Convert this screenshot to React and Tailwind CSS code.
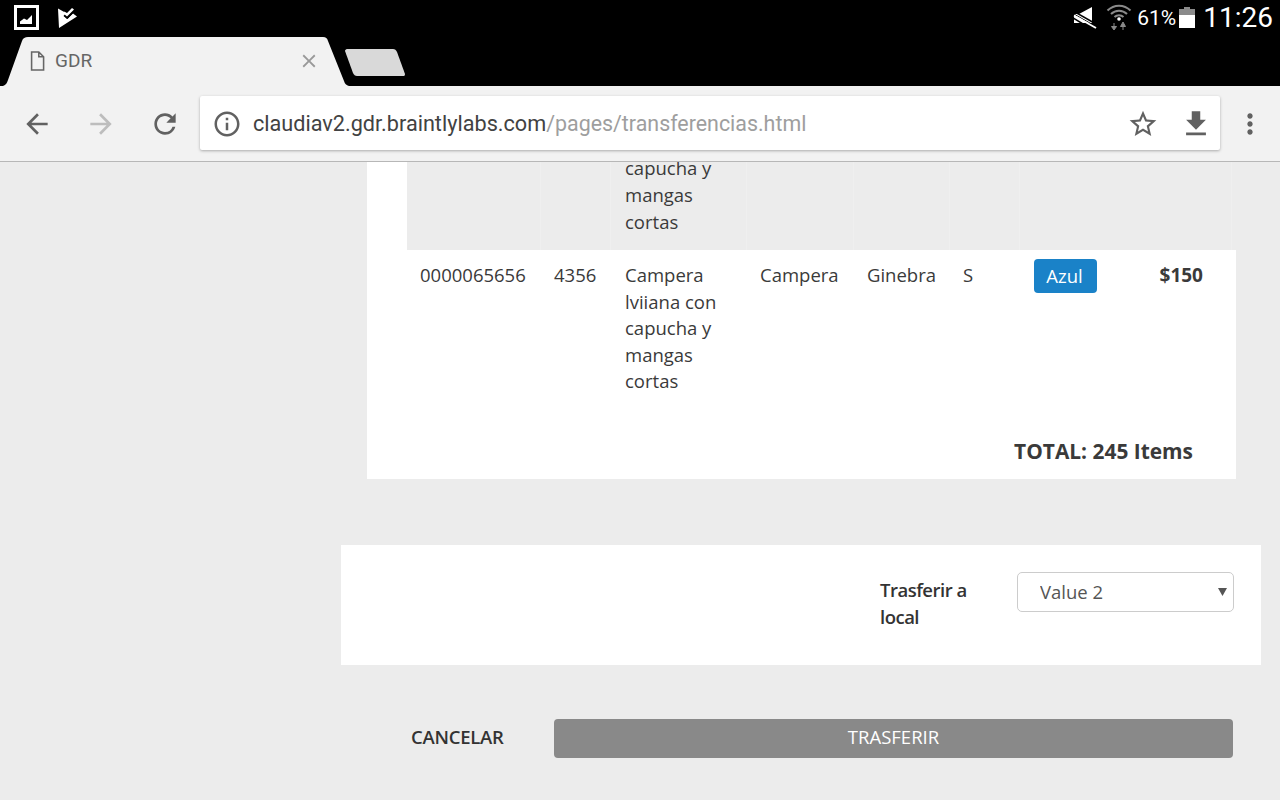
import { MdArrowBack, MdArrowForward, MdRefresh, MdStarBorder, MdFileDownload, MdInfoOutline, MdMoreVert, MdClose } from "react-icons/md";

const StatusBar = () => {
  return (
    <div className="flex h-[37px] items-start pr-[7px] text-white">
      <svg className="ml-[14px] mt-[5px]" width="25" height="25" viewBox="0 0 25 25">
        <rect x="1.5" y="1.5" width="22" height="22" fill="none" stroke="#fff" strokeWidth="3" />
        <path d="M6 19v-2.5l4-3 3 1.500 5-5v9z" fill="#fff" />
      </svg>
      <svg className="ml-[18px] mt-[7px]" width="22" height="22" viewBox="0 0 22 22">
        <path d="M1 1.500l8 4.500L6.500 9l3.500 3 6-5.500 4 3L2 21z" fill="#fff" />
        <path d="M8 8.500l2.500 2.200L17.500 3" fill="none" stroke="#000" strokeWidth="2" />
        <path d="M7 4.500l3 1.500 5-5 2 1.500-7 7-3.500-3z" fill="#fff" />
      </svg>
      <svg className="ml-auto mt-[7px]" width="24" height="22" viewBox="0 0 24 22">
        <path d="M1 7h5L19 0v16H1z" fill="#fff" />
        <path d="M0 4L23 17" stroke="#000" strokeWidth="1.500" />
        <path d="M0 6.500L23 19.500" stroke="#000" strokeWidth="1" />
        <path d="M1 8.500L23 21" stroke="#fff" strokeWidth="2" />
        <path d="M0 11L15 20" stroke="#000" strokeWidth="1.500" />
      </svg>
      <svg className="ml-[9px] mt-[2px]" width="26" height="29" viewBox="0 0 26 29">
        <path d="M1.500 8.500C8 2 18 2 24.500 8.500M5 12c4.500-4.500 11.500-4.500 16 0M8.500 15c2.500-2.500 6.500-2.500 9 0" fill="none" stroke="#8a8a8a" strokeWidth="2" />
        <circle cx="13" cy="17" r="1.800" fill="#fff" />
        <path d="M8 21v5M5.500 24.500L8 28l2.500-3.500zM17 28v-6M14.500 24.500L17 20l2.500 4.500z" fill="#8a8a8a" stroke="#8a8a8a" />
      </svg>
      <span className="ml-[5px] mt-[5px] font-['Roboto',sans-serif] text-[21px] leading-[27px]">61%</span>
      <svg className="ml-[3px] mt-[7px]" width="16" height="21" viewBox="0 0 16 21">
        <path d="M5 0h6v2h5v6H0V2h5z" fill="#8a8a8a" />
        <rect y="8" width="16" height="13" fill="#fff" />
      </svg>
      <span className="ml-[8px] mt-[1px] font-['Roboto',sans-serif] text-[28px] leading-[33px]">11:26</span>
    </div>
  );
};

const TabStrip = () => {
  return (
    <div className="flex h-[49px] items-start">
      <div className="relative h-[49px] w-[352px]">
        <svg className="absolute left-0 top-0" width="352" height="49" viewBox="0 0 352 49">
          <path d="M3 49C6 48 7 46 8 43L22 4C23 1 25 0 28 0H323C326 0 327 1 328 4L344 44C345 47 346 48 349 49z" fill="#f2f2f2" />
        </svg>
        <div className="relative flex h-[49px] items-center pb-[1px] pl-[25px]">
          <svg width="24" height="24" viewBox="0 0 20 20">
            <path d="M5.500 2.500h6l4 4v11h-10z M11.500 2.500v4h4" fill="none" stroke="#666" strokeWidth="1.300" />
          </svg>
          <span className="ml-[6px] font-['Roboto',sans-serif] text-[19px] text-[#666]">GDR</span>
          <MdClose className="ml-auto mr-[32px] text-[#999]" size={22} />
        </div>
      </div>
      <svg className="-ml-[7px] mt-[12px]" width="60" height="28" viewBox="0 0 60 28">
        <path d="M2 0H48C50 0 51 1 52 3L60 25C60 27 59 27 58 27H12C10 27 9 26 8 24L0 2C0 1 1 0 2 0z" fill="#d9d9d9" />
      </svg>
    </div>
  );
};

const Toolbar = () => {
  return (
    <div className="flex h-[76px] shrink-0 items-start border-b border-[#b7b7b7] bg-[#f2f2f2] pl-[5px] pt-[10px]">
      <div className="flex h-[54px] w-[64px] items-center justify-center pt-[2px] text-[#616161]">
        <MdArrowBack size={32} />
      </div>
      <div className="flex h-[54px] w-[64px] items-center justify-center pt-[2px] text-[#bdbdbd]">
        <MdArrowForward size={32} />
      </div>
      <div className="flex h-[54px] w-[64px] items-center justify-center pt-[2px] text-[#616161]">
        <MdRefresh size={32} />
      </div>
      <div className="ml-[3px] flex h-[54px] w-[1020px] items-center rounded-[2px] bg-white pl-[12px] pr-[7px] pt-[2px] font-['Roboto',sans-serif] text-[#9e9e9e] shadow-[0_1px_3px_rgba(0,0,0,0.3)]">
        <MdInfoOutline className="mr-[11px] text-[#616161]" size={30} />
        <span className="text-[21.65px] text-[#424242]">claudiav2.gdr.braintlylabs.com</span>
        <span className="text-[21.4px]">/pages/transferencias.html</span>
        <MdStarBorder className="ml-auto text-[#616161]" size={32} />
        <MdFileDownload className="ml-[20px] text-[#616161]" size={34} />
      </div>
      <div className="flex h-[54px] w-[60px] items-center justify-center pt-[2px] text-[#616161]">
        <MdMoreVert size={32} />
      </div>
    </div>
  );
};

// fila anterior, cortada por el scroll: solo se ve el final de la descripcion
const ScrolledRow = () => {
  return (
    <div className="grid h-[88px] grid-cols-[134px_70px_136px_107px_96px_70px_212px_4px] bg-[#ececec]">
      <div className="border-r border-[#efefef]" />
      <div className="border-r border-[#efefef]" />
      <div className="border-r border-[#efefef] pl-[14px] pr-[14px]">
        <div className="-mt-[8px] leading-[27px]">capucha y mangas cortas</div>
      </div>
      <div className="border-r border-[#efefef]" />
      <div className="border-r border-[#efefef]" />
      <div className="border-r border-[#efefef]" />
      <div className="border-r border-[#efefef]" />
      <div />
    </div>
  );
};

const Row = () => {
  return (
    <div className="grid h-[158px] grid-cols-[134px_70px_136px_107px_96px_70px_126px_90px] bg-white">
      <div className="pl-[13px] pt-[12px]">0000065656</div>
      <div className="pl-[13px] pt-[12px]">4356</div>
      <div className="pl-[14px] pr-[14px] pt-[12px]">Campera lviiana con capucha y mangas cortas</div>
      <div className="pl-[13px] pt-[12px]">Campera</div>
      <div className="pl-[13px] pt-[12px]">Ginebra</div>
      <div className="pl-[13px] pt-[12px]">S</div>
      <div className="pl-[14px] pt-[9px]">
        <span className="flex h-[34px] w-[63px] items-center justify-center rounded-[4px] bg-[#1a82c8] pr-[2px] text-white">Azul</span>
      </div>
      <div className="pr-[33px] pt-[12px] text-right text-[19px] font-bold">$150</div>
    </div>
  );
};

export default function App() {
  return (
    <div className="flex h-[800px] w-[1280px] flex-col overflow-hidden bg-[#ececec] font-['Open_Sans',sans-serif] text-[18.5px] leading-[26.6px] text-[#3a3a3a]">
      <div className="h-[86px] shrink-0 bg-black">
        <StatusBar />
        <TabStrip />
      </div>
      <Toolbar />
      <main className="min-h-0 flex-1 overflow-hidden pl-[341px]">
        <div className="ml-[26px] w-[869px] bg-white pl-[40px]">
          <ScrolledRow />
          <Row />
          <div className="pb-[14px] pr-[43px] pt-[30px] text-right text-[20.9px] font-bold leading-[27px]">TOTAL: 245 Items</div>
        </div>
        <section className="mt-[66px] flex h-[120px] w-[920px] items-start bg-white pl-[539px] pt-[27px]">
          <label className="mt-[5px] w-[137px] pr-[30px] font-semibold tracking-[-0.5px] text-[#333]">Trasferir a local</label>
          <div className="relative w-[217px]">
            <select defaultValue="Value 2" className="h-[40px] w-full appearance-none rounded-[5px] border border-[#ccc] bg-white pl-[22px] text-[#555]">
              <option>Value 1</option>
              <option>Value 2</option>
            </select>
            <svg className="absolute right-[7px] top-[15px]" width="9" height="9" viewBox="0 0 9 9">
              <path d="M0 1h9L4.500 9z" fill="#555" />
            </svg>
          </div>
        </section>
        <div className="mt-[54px] flex h-[39px] items-center pl-[70px]">
          <button className="w-[143px] pb-[2px] text-left font-semibold tracking-[-0.25px] text-[#333]">CANCELAR</button>
          <button className="h-[39px] w-[679px] rounded-[4px] bg-[#898989] pb-[2px] text-white">TRASFERIR</button>
        </div>
      </main>
    </div>
  );
}
